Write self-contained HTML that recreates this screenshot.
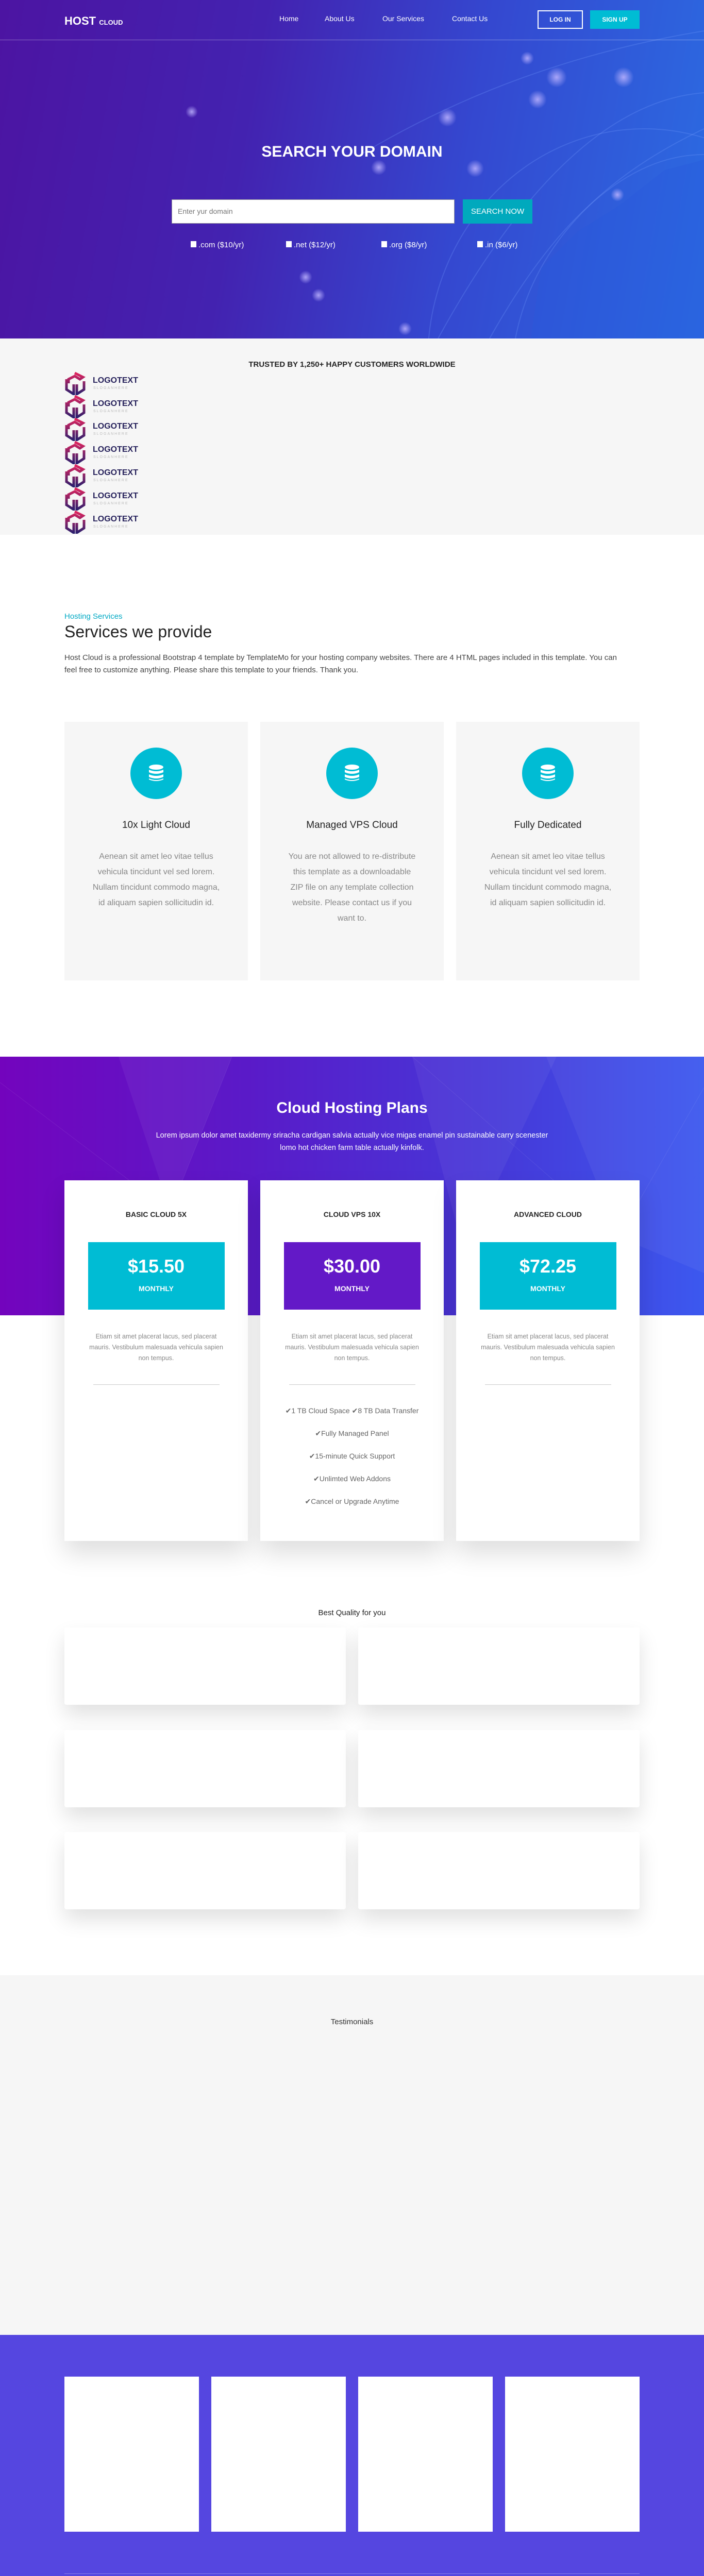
<!DOCTYPE html>
<html style="height:5167px;overflow:hidden"><head><meta charset="utf-8">
<style>
*{margin:0;padding:0;box-sizing:border-box}
body{width:1366px;height:5167px;font-family:"Liberation Sans",sans-serif;background:#fff;position:relative;overflow:hidden;color:#333}
.abs{position:absolute}
.hero{left:0;top:0;width:1366px;height:657px;background:linear-gradient(100deg,#4c14a2 0%,#4322b0 35%,#3448d0 65%,#2b6ce2 100%);overflow:hidden}
.dot{position:absolute;border-radius:50%;background:radial-gradient(circle,rgba(190,180,255,.85),rgba(150,140,255,0) 70%)}
.nav a{position:absolute;top:28px;color:#fff;font-size:14px;text-decoration:none}
.center{text-align:center;left:0;width:1366px}
.svc{top:1401px;width:356px;height:502px;background:#f6f6f6;text-align:center}
.svc .c{width:100px;height:100px;border-radius:50%;background:#00bcd4;margin:50px auto 0;position:relative}
.svc h4{font-weight:normal;font-size:19px;color:#222;margin-top:40px}
.svc p{font-size:16px;line-height:30px;color:#888;margin:35px auto 0;width:250px}
.plan{top:2291px;width:356px;height:700px;background:#fff;box-shadow:0 25px 45px rgba(0,0,0,.13);text-align:center}
.plan h5{font-size:14px;color:#222;margin-top:58px}
.plan .pb{width:265px;height:131px;margin:46px auto 0;color:#fff;padding-top:26px}
.plan .pb b{font-size:36px;display:block}
.plan .pb span{font-size:14px;font-weight:bold;display:block;margin-top:14px}
.plan p{font-size:12.5px;line-height:21px;color:#888;width:260px;margin:42px auto 0}
.plan hr{border:0;border-top:1px solid #ccc;width:245px;margin:40px auto 0}
.plan ul{list-style:none;font-size:14px;color:#666}
.plan li{height:44px;line-height:44px}
.q{width:546px;height:150px;background:#fff;border-radius:4px;box-shadow:0 20px 40px rgba(0,0,0,.12)}
.f{top:4613px;width:261px;height:301px;background:#fff}
</style></head><body>

<div class="abs hero">
  <div class="dot" style="left:1060px;top:130px;width:40px;height:40px"></div>
  <div class="dot" style="left:1190px;top:130px;width:40px;height:40px"></div>
  <div class="dot" style="left:1025px;top:175px;width:36px;height:36px"></div>
  <div class="dot" style="left:850px;top:210px;width:36px;height:36px"></div>
  <div class="dot" style="left:360px;top:205px;width:24px;height:24px"></div>
  <div class="dot" style="left:1010px;top:100px;width:26px;height:26px"></div>
  <div class="dot" style="left:720px;top:310px;width:30px;height:30px"></div>
  <div class="dot" style="left:905px;top:310px;width:34px;height:34px"></div>
  <div class="dot" style="left:1185px;top:365px;width:26px;height:26px"></div>
  <div class="dot" style="left:580px;top:525px;width:26px;height:26px"></div>
  <div class="dot" style="left:605px;top:560px;width:26px;height:26px"></div>
  <div class="dot" style="left:773px;top:625px;width:26px;height:26px"></div>
  <svg class="abs" style="left:0;top:0" width="1366" height="657"><g fill="none" stroke="rgba(120,160,255,.25)" stroke-width="2"><path d="M850 657 Q1100 200 1366 180"/><path d="M950 657 Q1150 300 1366 300"/><path d="M700 300 Q1000 120 1366 60"/><path d="M1000 657 Q1050 400 1366 250"/><ellipse cx="1250" cy="700" rx="420" ry="450"/></g><path d="M1030 657 L1050 520 1120 450 1200 400 1290 330 1366 310 1366 657Z" fill="rgba(40,90,220,.35)"/></svg>
  <div class="abs" style="left:125px;top:28px;color:#fff;font-weight:bold;font-size:22px">HOST <span style="font-size:13px">CLOUD</span></div>
  <div class="nav"><a style="left:542px">Home</a><a style="left:630px">About Us</a><a style="left:742px">Our Services</a><a style="left:877px">Contact Us</a></div>
  <div class="abs" style="left:1043px;top:20px;width:88px;height:36px;border:2px solid #fff;color:#fff;font-size:12px;font-weight:bold;text-align:center;line-height:32px">LOG IN</div>
  <div class="abs" style="left:1145px;top:20px;width:96px;height:36px;background:#00bcd4;color:#fff;font-size:12px;font-weight:bold;text-align:center;line-height:36px">SIGN UP</div>
  <div class="abs" style="left:0;top:77px;width:1366px;height:1px;background:rgba(255,255,255,.35)"></div>
  <div class="abs center" style="top:278px;color:#fff;font-weight:bold;font-size:30px">SEARCH YOUR DOMAIN</div>
  <div class="abs" style="left:333px;top:387px;width:549px;height:47px;background:#fff;border:1px solid #999;color:#777;font-size:14px;line-height:45px;padding-left:11px">Enter yur domain</div>
  <div class="abs" style="left:898px;top:387px;width:135px;height:47px;background:#00a9bd;color:#fff;font-size:15px;text-align:center;line-height:47px">SEARCH NOW</div>
  <div class="abs" style="top:467px;left:0;color:#fff;font-size:15px">
    <span class="abs" style="left:370px;white-space:nowrap"><span style="display:inline-block;width:11px;height:12px;background:#fff;margin-right:4px"></span>.com ($10/yr)</span>
    <span class="abs" style="left:555px;white-space:nowrap"><span style="display:inline-block;width:11px;height:12px;background:#fff;margin-right:4px"></span>.net ($12/yr)</span>
    <span class="abs" style="left:740px;white-space:nowrap"><span style="display:inline-block;width:11px;height:12px;background:#fff;margin-right:4px"></span>.org ($8/yr)</span>
    <span class="abs" style="left:926px;white-space:nowrap"><span style="display:inline-block;width:11px;height:12px;background:#fff;margin-right:4px"></span>.in ($6/yr)</span>
  </div>
</div>

<div class="abs" style="left:0;top:657px;width:1366px;height:381px;background:#f6f6f6"></div>
<div class="abs center" style="top:699px;font-size:15px;font-weight:bold;color:#222">TRUSTED BY 1,250+ HAPPY CUSTOMERS WORLDWIDE</div>

<svg width="0" height="0" style="position:absolute"><defs><linearGradient id="lg" x1="0" y1="0" x2="0" y2="1"><stop offset="0" stop-color="#e0245e"/><stop offset="1" stop-color="#2c1f6e"/></linearGradient></defs></svg>
<div class="abs" style="left:125px;top:722px;width:200px">
  <div style="height:45px;position:relative"><svg width="42" height="45" viewBox="0 0 42 45"><path d="M20 2 L36 10 L30 14 L20 8 L8 14 L8 22 M4 14 V34 L18 43 V24 M24 24 V43 L38 34 V18" fill="none" stroke="url(#lg)" stroke-width="5"/></svg><b style="position:absolute;left:55px;top:8px;font-size:16px;color:#25205a">LOGOTEXT</b><span style="position:absolute;left:56px;top:28px;font-size:7px;letter-spacing:2px;color:#bbb">SLOGANHERE</span></div>
  <div style="height:44px;position:relative"><svg width="42" height="45" viewBox="0 0 42 45"><path d="M20 2 L36 10 L30 14 L20 8 L8 14 L8 22 M4 14 V34 L18 43 V24 M24 24 V43 L38 34 V18" fill="none" stroke="url(#lg)" stroke-width="5"/></svg><b style="position:absolute;left:55px;top:8px;font-size:16px;color:#25205a">LOGOTEXT</b><span style="position:absolute;left:56px;top:28px;font-size:7px;letter-spacing:2px;color:#bbb">SLOGANHERE</span></div>
  <div style="height:45px;position:relative"><svg width="42" height="45" viewBox="0 0 42 45"><path d="M20 2 L36 10 L30 14 L20 8 L8 14 L8 22 M4 14 V34 L18 43 V24 M24 24 V43 L38 34 V18" fill="none" stroke="url(#lg)" stroke-width="5"/></svg><b style="position:absolute;left:55px;top:8px;font-size:16px;color:#25205a">LOGOTEXT</b><span style="position:absolute;left:56px;top:28px;font-size:7px;letter-spacing:2px;color:#bbb">SLOGANHERE</span></div>
  <div style="height:45px;position:relative"><svg width="42" height="45" viewBox="0 0 42 45"><path d="M20 2 L36 10 L30 14 L20 8 L8 14 L8 22 M4 14 V34 L18 43 V24 M24 24 V43 L38 34 V18" fill="none" stroke="url(#lg)" stroke-width="5"/></svg><b style="position:absolute;left:55px;top:8px;font-size:16px;color:#25205a">LOGOTEXT</b><span style="position:absolute;left:56px;top:28px;font-size:7px;letter-spacing:2px;color:#bbb">SLOGANHERE</span></div>
  <div style="height:45px;position:relative"><svg width="42" height="45" viewBox="0 0 42 45"><path d="M20 2 L36 10 L30 14 L20 8 L8 14 L8 22 M4 14 V34 L18 43 V24 M24 24 V43 L38 34 V18" fill="none" stroke="url(#lg)" stroke-width="5"/></svg><b style="position:absolute;left:55px;top:8px;font-size:16px;color:#25205a">LOGOTEXT</b><span style="position:absolute;left:56px;top:28px;font-size:7px;letter-spacing:2px;color:#bbb">SLOGANHERE</span></div>
  <div style="height:45px;position:relative"><svg width="42" height="45" viewBox="0 0 42 45"><path d="M20 2 L36 10 L30 14 L20 8 L8 14 L8 22 M4 14 V34 L18 43 V24 M24 24 V43 L38 34 V18" fill="none" stroke="url(#lg)" stroke-width="5"/></svg><b style="position:absolute;left:55px;top:8px;font-size:16px;color:#25205a">LOGOTEXT</b><span style="position:absolute;left:56px;top:28px;font-size:7px;letter-spacing:2px;color:#bbb">SLOGANHERE</span></div>
  <div style="height:45px;position:relative"><svg width="42" height="45" viewBox="0 0 42 45"><path d="M20 2 L36 10 L30 14 L20 8 L8 14 L8 22 M4 14 V34 L18 43 V24 M24 24 V43 L38 34 V18" fill="none" stroke="url(#lg)" stroke-width="5"/></svg><b style="position:absolute;left:55px;top:8px;font-size:16px;color:#25205a">LOGOTEXT</b><span style="position:absolute;left:56px;top:28px;font-size:7px;letter-spacing:2px;color:#bbb">SLOGANHERE</span></div>
</div>

<div class="abs" style="left:125px;top:1188px;color:#00a9c4;font-size:15px">Hosting Services</div>
<div class="abs" style="left:125px;top:1208px;color:#222;font-size:32px">Services we provide</div>
<div class="abs" style="left:125px;top:1265px;width:1090px;color:#444;font-size:15px;line-height:24px">Host Cloud is a professional Bootstrap 4 template by TemplateMo for your hosting company websites. There are 4 HTML pages included in this template. You can feel free to customize anything. Please share this template to your friends. Thank you.</div>

<div class="abs svc" style="left:125px"><div class="c"><svg class="abs" style="left:35px;top:33px" width="30" height="34" viewBox="0 0 30 34"><g fill="#fff"><ellipse cx="15" cy="5" rx="14" ry="5"/><path d="M1 10 Q15 16 29 10 V15 Q15 21 1 15Z"/><path d="M1 19 Q15 25 29 19 V24 Q15 30 1 24Z"/><path d="M1 27 Q15 33 29 27 V29 Q15 35 1 29Z"/></g></svg></div><h4>10x Light Cloud</h4><p>Aenean sit amet leo vitae tellus vehicula tincidunt vel sed lorem. Nullam tincidunt commodo magna, id aliquam sapien sollicitudin id.</p></div>
<div class="abs svc" style="left:505px"><div class="c"><svg class="abs" style="left:35px;top:33px" width="30" height="34" viewBox="0 0 30 34"><g fill="#fff"><ellipse cx="15" cy="5" rx="14" ry="5"/><path d="M1 10 Q15 16 29 10 V15 Q15 21 1 15Z"/><path d="M1 19 Q15 25 29 19 V24 Q15 30 1 24Z"/><path d="M1 27 Q15 33 29 27 V29 Q15 35 1 29Z"/></g></svg></div><h4>Managed VPS Cloud</h4><p>You are not allowed to re-distribute this template as a downloadable ZIP file on any template collection website. Please contact us if you want to.</p></div>
<div class="abs svc" style="left:885px"><div class="c"><svg class="abs" style="left:35px;top:33px" width="30" height="34" viewBox="0 0 30 34"><g fill="#fff"><ellipse cx="15" cy="5" rx="14" ry="5"/><path d="M1 10 Q15 16 29 10 V15 Q15 21 1 15Z"/><path d="M1 19 Q15 25 29 19 V24 Q15 30 1 24Z"/><path d="M1 27 Q15 33 29 27 V29 Q15 35 1 29Z"/></g></svg></div><h4>Fully Dedicated</h4><p>Aenean sit amet leo vitae tellus vehicula tincidunt vel sed lorem. Nullam tincidunt commodo magna, id aliquam sapien sollicitudin id.</p></div>

<div class="abs" style="left:0;top:2051px;width:1366px;height:502px;background:linear-gradient(90deg,#7304bd 0%,#5a1ac8 35%,#4638d8 70%,#3c58ef 100%);overflow:hidden">
  <svg width="1366" height="502"><g fill="rgba(255,255,255,.05)"><path d="M230 0 L450 0 L330 300Z"/><path d="M800 0 L1080 0 L900 380Z"/><path d="M1060 0 L1366 0 L1366 220 L1200 350Z"/><path d="M1200 350 L1366 220 L1366 420Z"/></g><g stroke="rgba(255,255,255,.08)" fill="none"><path d="M0 50 L330 300 L450 0"/><path d="M800 0 L1200 350 L1366 60"/></g></svg>
</div>
<div class="abs center" style="top:2134px;color:#fff;font-weight:bold;font-size:30px">Cloud Hosting Plans</div>
<div class="abs" style="left:293px;top:2192px;width:780px;text-align:center;color:#fff;font-size:14.5px;line-height:24px">Lorem ipsum dolor amet taxidermy sriracha cardigan salvia actually vice migas enamel pin sustainable carry scenester lomo hot chicken farm table actually kinfolk.</div>

<div class="abs plan" style="left:125px"><h5>BASIC CLOUD 5X</h5><div class="pb" style="background:#00bcd4"><b>$15.50</b><span>MONTHLY</span></div><p>Etiam sit amet placerat lacus, sed placerat mauris. Vestibulum malesuada vehicula sapien non tempus.</p><hr></div>
<div class="abs plan" style="left:505px"><h5>CLOUD VPS 10X</h5><div class="pb" style="background:#6319c7"><b>$30.00</b><span>MONTHLY</span></div><p>Etiam sit amet placerat lacus, sed placerat mauris. Vestibulum malesuada vehicula sapien non tempus.</p><hr><ul style="margin-top:28px"><li>✔1 TB Cloud Space ✔8 TB Data Transfer</li><li>✔Fully Managed Panel</li><li>✔15-minute Quick Support</li><li>✔Unlimted Web Addons</li><li>✔Cancel or Upgrade Anytime</li></ul></div>
<div class="abs plan" style="left:885px"><h5>ADVANCED CLOUD</h5><div class="pb" style="background:#00bcd4"><b>$72.25</b><span>MONTHLY</span></div><p>Etiam sit amet placerat lacus, sed placerat mauris. Vestibulum malesuada vehicula sapien non tempus.</p><hr></div>

<div class="abs center" style="top:3122px;font-size:15px;color:#222">Best Quality for you</div>
<div class="abs q" style="left:125px;top:3159px"></div><div class="abs q" style="left:695px;top:3159px"></div>
<div class="abs q" style="left:125px;top:3358px"></div><div class="abs q" style="left:695px;top:3358px"></div>
<div class="abs q" style="left:125px;top:3556px"></div><div class="abs q" style="left:695px;top:3556px"></div>

<div class="abs" style="left:0;top:3834px;width:1366px;height:698px;background:#f6f6f6"></div>
<div class="abs center" style="top:3916px;font-size:15px;color:#333">Testimonials</div>

<div class="abs" style="left:0;top:4532px;width:1366px;height:635px;background:#5546e0"></div>
<div class="abs f" style="left:125px"></div><div class="abs f" style="left:410px"></div><div class="abs f" style="left:695px"></div><div class="abs f" style="left:980px"></div>
<div class="abs" style="left:125px;top:4995px;width:1116px;height:1px;background:rgba(255,255,255,.3)"></div>
<div class="abs center" style="top:5048px;color:#fff;font-size:15px">Copyright</div>
</body></html>
